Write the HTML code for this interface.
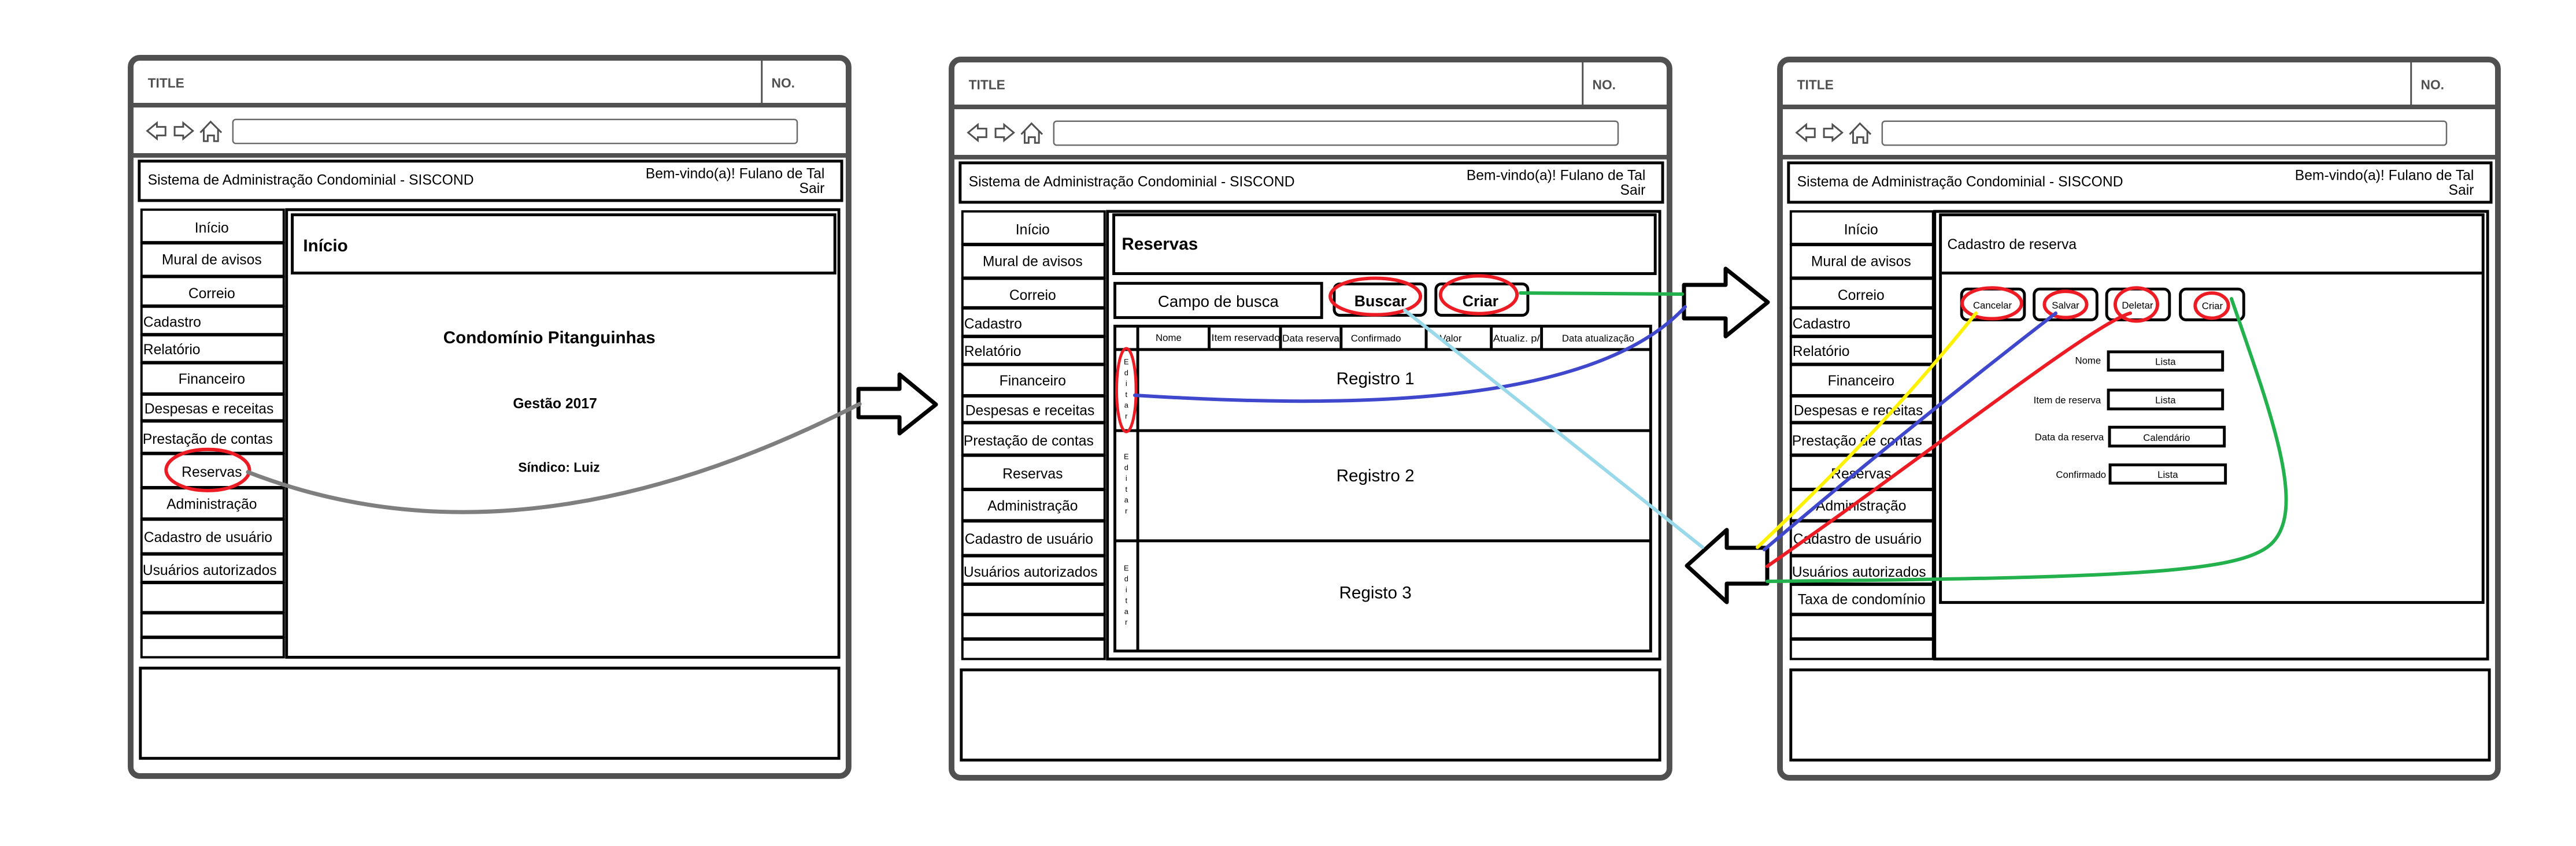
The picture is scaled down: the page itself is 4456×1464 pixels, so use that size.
<!DOCTYPE html>
<html><head><meta charset="utf-8"><style>
html,body{margin:0;padding:0;background:#fff;}
svg{display:block}
text{font-family:"Liberation Sans",sans-serif;fill:#000}
</style></head><body>
<svg width="4456" height="1464" viewBox="0 0 4456 1464" xmlns="http://www.w3.org/2000/svg">
<rect width="4456" height="1464" fill="#fff"/>

<!-- ============ PANEL 1 ============ -->
<g transform="translate(226,100) scale(0.988)">
<rect x="0" y="0" width="1257" height="1258" rx="16" fill="#fff" stroke="#505050" stroke-width="10"/>
<line x1="0" y1="83" x2="1257" y2="83" stroke="#505050" stroke-width="8"/>
<line x1="1105" y1="0" x2="1105" y2="83" stroke="#505050" stroke-width="3"/>
<text x="30" y="52" font-size="23" font-weight="bold" style="fill:#505050">TITLE</text>
<text x="1122" y="52" font-size="23" font-weight="bold" style="fill:#505050">NO.</text>
<line x1="0" y1="171" x2="1257" y2="171" stroke="#505050" stroke-width="8"/>
<rect x="179" y="108" width="988" height="42" rx="5" fill="none" stroke="#6a6a6a" stroke-width="2.5"/>
<g fill="none" stroke="#505050" stroke-width="3" stroke-linejoin="miter">
<polygon points="29,128 46,114 46,121 61,121 61,136 46,136 46,142"/>
<polygon points="109,128 92,114 92,121 77,121 77,136 92,136 92,142"/>
<polyline points="122,131 140,112 159,131"/>
<polyline points="128,125 128,146 135,146 135,136 146,136 146,146 153,146 153,125"/>
</g>
<rect x="15" y="181" width="1230" height="69" fill="none" stroke="#000" stroke-width="5"/>
<text x="30" y="222" font-size="25">Sistema de Administração Condominial - SISCOND</text>
<text x="1215" y="211" font-size="25" text-anchor="end">Bem-vindo(a)! Fulano de Tal</text>
<text x="1215" y="237" font-size="25" text-anchor="end">Sair</text>
<g fill="none" stroke="#000" stroke-width="4">
<rect x="19" y="266" width="249" height="57"/><rect x="19" y="325" width="249" height="57"/>
<rect x="19" y="384" width="249" height="50"/><rect x="19" y="436" width="249" height="48"/>
<rect x="19" y="486" width="249" height="47"/><rect x="19" y="535" width="249" height="53"/>
<rect x="19" y="590" width="249" height="45"/><rect x="19" y="637" width="249" height="55"/>
<rect x="19" y="694" width="249" height="58"/><rect x="19" y="754" width="249" height="53"/>
<rect x="19" y="809" width="249" height="59"/><rect x="19" y="870" width="249" height="48"/>
<rect x="19" y="920" width="249" height="51"/><rect x="19" y="973" width="249" height="41"/>
<rect x="19" y="1016" width="249" height="34"/>
</g>
<g font-size="25">
<text x="142" y="306" text-anchor="middle">Início</text>
<text x="142" y="362" text-anchor="middle">Mural de avisos</text>
<text x="142" y="421" text-anchor="middle">Correio</text>
<text x="22" y="471">Cadastro</text>
<text x="22" y="519">Relatório</text>
<text x="142" y="571" text-anchor="middle">Financeiro</text>
<text x="24" y="623">Despesas e receitas</text>
<text x="21" y="676">Prestação de contas</text>
<text x="142" y="734" text-anchor="middle">Reservas</text>
<text x="142" y="790" text-anchor="middle">Administração</text>
<text x="23" y="848">Cadastro de usuário</text>
<text x="21" y="906">Usuários autorizados</text>
</g>
<rect x="273" y="266" width="967" height="784" fill="none" stroke="#000" stroke-width="5"/>
<rect x="283" y="275" width="950" height="102" fill="none" stroke="#000" stroke-width="5"/>
<text x="302" y="339" font-size="30" font-weight="bold">Início</text>
<text x="733" y="500" font-size="30" font-weight="bold" text-anchor="middle">Condomínio Pitanguinhas</text>
<text x="743" y="614" font-size="25" font-weight="bold" text-anchor="middle">Gestão 2017</text>
<text x="750" y="725" font-size="23" font-weight="bold" text-anchor="middle">Síndico: Luiz</text>
<rect x="17" y="1069" width="1223" height="158" fill="none" stroke="#000" stroke-width="5"/>
<ellipse cx="135" cy="722" rx="73" ry="36" fill="none" stroke="#ed1c24" stroke-width="6"/>
</g>

<!-- ============ PANEL 2 ============ -->
<g transform="translate(1646,103) scale(0.988)">
<rect x="0" y="0" width="1257" height="1258" rx="16" fill="#fff" stroke="#505050" stroke-width="10"/>
<line x1="0" y1="83" x2="1257" y2="83" stroke="#505050" stroke-width="8"/>
<line x1="1105" y1="0" x2="1105" y2="83" stroke="#505050" stroke-width="3"/>
<text x="30" y="52" font-size="23" font-weight="bold" style="fill:#505050">TITLE</text>
<text x="1122" y="52" font-size="23" font-weight="bold" style="fill:#505050">NO.</text>
<line x1="0" y1="171" x2="1257" y2="171" stroke="#505050" stroke-width="8"/>
<rect x="179" y="108" width="988" height="42" rx="5" fill="none" stroke="#6a6a6a" stroke-width="2.5"/>
<g fill="none" stroke="#505050" stroke-width="3">
<polygon points="29,128 46,114 46,121 61,121 61,136 46,136 46,142"/>
<polygon points="109,128 92,114 92,121 77,121 77,136 92,136 92,142"/>
<polyline points="122,131 140,112 159,131"/>
<polyline points="128,125 128,146 135,146 135,136 146,136 146,146 153,146 153,125"/>
</g>
<rect x="15" y="181" width="1230" height="69" fill="none" stroke="#000" stroke-width="5"/>
<text x="30" y="222" font-size="25">Sistema de Administração Condominial - SISCOND</text>
<text x="1215" y="211" font-size="25" text-anchor="end">Bem-vindo(a)! Fulano de Tal</text>
<text x="1215" y="237" font-size="25" text-anchor="end">Sair</text>
<g fill="none" stroke="#000" stroke-width="4">
<rect x="19" y="266" width="249" height="57"/><rect x="19" y="325" width="249" height="57"/>
<rect x="19" y="384" width="249" height="50"/><rect x="19" y="436" width="249" height="48"/>
<rect x="19" y="486" width="249" height="47"/><rect x="19" y="535" width="249" height="53"/>
<rect x="19" y="590" width="249" height="45"/><rect x="19" y="637" width="249" height="55"/>
<rect x="19" y="694" width="249" height="58"/><rect x="19" y="754" width="249" height="53"/>
<rect x="19" y="809" width="249" height="59"/><rect x="19" y="870" width="249" height="48"/>
<rect x="19" y="920" width="249" height="51"/><rect x="19" y="973" width="249" height="41"/>
<rect x="19" y="1016" width="249" height="34"/>
</g>
<g font-size="25">
<text x="142" y="306" text-anchor="middle">Início</text>
<text x="142" y="362" text-anchor="middle">Mural de avisos</text>
<text x="142" y="421" text-anchor="middle">Correio</text>
<text x="22" y="471">Cadastro</text>
<text x="22" y="519">Relatório</text>
<text x="142" y="571" text-anchor="middle">Financeiro</text>
<text x="24" y="623">Despesas e receitas</text>
<text x="21" y="676">Prestação de contas</text>
<text x="142" y="734" text-anchor="middle">Reservas</text>
<text x="142" y="790" text-anchor="middle">Administração</text>
<text x="23" y="848">Cadastro de usuário</text>
<text x="21" y="906">Usuários autorizados</text>
</g>
<rect x="273" y="266" width="967" height="784" fill="none" stroke="#000" stroke-width="5"/>
<rect x="284" y="272" width="948" height="103" fill="none" stroke="#000" stroke-width="5"/>
<text x="298" y="333" font-size="30" font-weight="bold">Reservas</text>
<rect x="286" y="392" width="362" height="60" fill="none" stroke="#000" stroke-width="5"/>
<text x="467" y="433" font-size="28" text-anchor="middle">Campo de busca</text>
<rect x="670" y="393" width="160" height="55" rx="10" fill="none" stroke="#000" stroke-width="5"/>
<text x="751" y="432" font-size="27" font-weight="bold" text-anchor="middle">Buscar</text>
<rect x="848" y="393" width="161" height="55" rx="10" fill="none" stroke="#000" stroke-width="5"/>
<text x="926" y="432" font-size="27" font-weight="bold" text-anchor="middle">Criar</text>
<rect x="286" y="467" width="938" height="569" fill="none" stroke="#000" stroke-width="5"/>
<line x1="286" y1="508" x2="1224" y2="508" stroke="#000" stroke-width="5"/>
<line x1="326" y1="467" x2="326" y2="1036" stroke="#000" stroke-width="5"/>
<g stroke="#000" stroke-width="5">
<line x1="451" y1="467" x2="451" y2="508"/><line x1="576" y1="467" x2="576" y2="508"/>
<line x1="682" y1="467" x2="682" y2="508"/><line x1="831" y1="467" x2="831" y2="508"/>
<line x1="945" y1="467" x2="945" y2="508"/><line x1="1033" y1="467" x2="1033" y2="508"/>
<line x1="286" y1="650" x2="1224" y2="650"/><line x1="286" y1="843" x2="1224" y2="843"/>
</g>
<g font-size="17">
<text x="380" y="493" text-anchor="middle">Nome</text>
<text x="455" y="493" textLength="120" lengthAdjust="spacingAndGlyphs">Item reservado</text>
<text x="579" y="494" textLength="100" lengthAdjust="spacingAndGlyphs">Data reserva</text>
<text x="743" y="494" text-anchor="middle">Confirmado</text>
<text x="874" y="494" text-anchor="middle">Valor</text>
<text x="948" y="494" textLength="82" lengthAdjust="spacingAndGlyphs">Atualiz. p/</text>
<text x="1132" y="494" text-anchor="middle">Data atualização</text>
</g>
<g font-size="30" text-anchor="middle">
<text x="742" y="569">Registro 1</text>
<text x="742" y="739">Registro 2</text>
<text x="742" y="944">Registo 3</text>
</g>
<g font-size="13" text-anchor="middle">
<text x="306" y="534">E</text><text x="306" y="553">d</text><text x="306" y="572">i</text><text x="306" y="591">t</text><text x="306" y="610">a</text><text x="306" y="629">r</text>
<text x="306" y="700">E</text><text x="306" y="719">d</text><text x="306" y="738">i</text><text x="306" y="757">t</text><text x="306" y="776">a</text><text x="306" y="795">r</text>
<text x="306" y="895">E</text><text x="306" y="914">d</text><text x="306" y="933">i</text><text x="306" y="952">t</text><text x="306" y="971">a</text><text x="306" y="990">r</text>
</g>
<rect x="17" y="1069" width="1223" height="158" fill="none" stroke="#000" stroke-width="5"/>
<ellipse cx="742" cy="415" rx="79" ry="32" fill="none" stroke="#ed1c24" stroke-width="6"/>
<ellipse cx="923" cy="412" rx="67" ry="33" fill="none" stroke="#ed1c24" stroke-width="6"/>
<ellipse cx="306" cy="579" rx="17" ry="73" fill="none" stroke="#ed1c24" stroke-width="5"/>
</g>

<!-- ============ PANEL 3 ============ -->
<g transform="translate(3079,103) scale(0.988)">
<rect x="0" y="0" width="1257" height="1258" rx="16" fill="#fff" stroke="#505050" stroke-width="10"/>
<line x1="0" y1="83" x2="1257" y2="83" stroke="#505050" stroke-width="8"/>
<line x1="1105" y1="0" x2="1105" y2="83" stroke="#505050" stroke-width="3"/>
<text x="30" y="52" font-size="23" font-weight="bold" style="fill:#505050">TITLE</text>
<text x="1122" y="52" font-size="23" font-weight="bold" style="fill:#505050">NO.</text>
<line x1="0" y1="171" x2="1257" y2="171" stroke="#505050" stroke-width="8"/>
<rect x="179" y="108" width="988" height="42" rx="5" fill="none" stroke="#6a6a6a" stroke-width="2.5"/>
<g fill="none" stroke="#505050" stroke-width="3">
<polygon points="29,128 46,114 46,121 61,121 61,136 46,136 46,142"/>
<polygon points="109,128 92,114 92,121 77,121 77,136 92,136 92,142"/>
<polyline points="122,131 140,112 159,131"/>
<polyline points="128,125 128,146 135,146 135,136 146,136 146,146 153,146 153,125"/>
</g>
<rect x="15" y="181" width="1230" height="69" fill="none" stroke="#000" stroke-width="5"/>
<text x="30" y="222" font-size="25">Sistema de Administração Condominial - SISCOND</text>
<text x="1215" y="211" font-size="25" text-anchor="end">Bem-vindo(a)! Fulano de Tal</text>
<text x="1215" y="237" font-size="25" text-anchor="end">Sair</text>
<g fill="none" stroke="#000" stroke-width="4">
<rect x="19" y="266" width="249" height="57"/><rect x="19" y="325" width="249" height="57"/>
<rect x="19" y="384" width="249" height="50"/><rect x="19" y="436" width="249" height="48"/>
<rect x="19" y="486" width="249" height="47"/><rect x="19" y="535" width="249" height="53"/>
<rect x="19" y="590" width="249" height="45"/><rect x="19" y="637" width="249" height="55"/>
<rect x="19" y="694" width="249" height="58"/><rect x="19" y="754" width="249" height="53"/>
<rect x="19" y="809" width="249" height="59"/><rect x="19" y="870" width="249" height="48"/>
<rect x="19" y="920" width="249" height="51"/><rect x="19" y="973" width="249" height="41"/>
<rect x="19" y="1016" width="249" height="34"/>
</g>
<g font-size="25">
<text x="142" y="306" text-anchor="middle">Início</text>
<text x="142" y="362" text-anchor="middle">Mural de avisos</text>
<text x="142" y="421" text-anchor="middle">Correio</text>
<text x="22" y="471">Cadastro</text>
<text x="22" y="519">Relatório</text>
<text x="142" y="571" text-anchor="middle">Financeiro</text>
<text x="24" y="623">Despesas e receitas</text>
<text x="21" y="676">Prestação de contas</text>
<text x="142" y="734" text-anchor="middle">Reservas</text>
<text x="142" y="790" text-anchor="middle">Administração</text>
<text x="23" y="848">Cadastro de usuário</text>
<text x="21" y="906">Usuários autorizados</text>
<text x="143" y="954" text-anchor="middle">Taxa de condomínio</text>
</g>
<rect x="271" y="266" width="968" height="784" fill="none" stroke="#000" stroke-width="5"/>
<rect x="281" y="272" width="950" height="679" fill="none" stroke="#000" stroke-width="5"/>
<line x1="281" y1="374" x2="1231" y2="374" stroke="#000" stroke-width="5"/>
<text x="293" y="332" font-size="25">Cadastro de reserva</text>
<g fill="none" stroke="#000" stroke-width="5">
<rect x="318" y="402" width="110" height="54" rx="10"/>
<rect x="445" y="402" width="110" height="54" rx="10"/>
<rect x="572" y="402" width="110" height="54" rx="10"/>
<rect x="701" y="402" width="111" height="54" rx="10"/>
</g>
<g font-size="17" text-anchor="middle">
<text x="372" y="436">Cancelar</text>
<text x="500" y="436">Salvar</text>
<text x="626" y="436">Deletar</text>
<text x="757" y="437">Criar</text>
</g>
<g font-size="17" text-anchor="end">
<text x="562" y="533">Nome</text>
<text x="562" y="602">Item de reserva</text>
<text x="567" y="667">Data da reserva</text>
<text x="571" y="733">Confirmado</text>
</g>
<g fill="none" stroke="#000" stroke-width="5">
<rect x="575" y="512" width="200" height="32"/>
<rect x="575" y="579" width="200" height="33"/>
<rect x="577" y="644" width="201" height="33"/>
<rect x="578" y="710" width="202" height="32"/>
</g>
<g font-size="17" text-anchor="middle">
<text x="675" y="535">Lista</text>
<text x="675" y="602">Lista</text>
<text x="677" y="668">Calendário</text>
<text x="679" y="733">Lista</text>
</g>
<rect x="19" y="1069" width="1223" height="158" fill="none" stroke="#000" stroke-width="5"/>
<ellipse cx="371" cy="427" rx="52" ry="27" fill="none" stroke="#ed1c24" stroke-width="6"/>
<ellipse cx="500" cy="429" rx="37" ry="23" fill="none" stroke="#ed1c24" stroke-width="6"/>
<ellipse cx="624" cy="429" rx="37" ry="29" fill="none" stroke="#ed1c24" stroke-width="6"/>
<ellipse cx="756" cy="431" rx="29" ry="22" fill="none" stroke="#ed1c24" stroke-width="6"/>
</g>

<!-- ============ ARROWS ============ -->
<g fill="#fff" stroke="#000" stroke-width="7" stroke-linejoin="round">
<polygon points="1485,673 1556,673 1556,648 1619,700 1556,750 1556,722 1485,722"/>
<polygon points="2913,493 2985,493 2985,465 3058,523 2985,582 2985,551 2913,551"/>
<polygon points="3057,948 2987,948 2987,917 2918,979 2987,1042 2987,1010 3057,1010"/>
</g>

<!-- ============ CONNECTORS ============ -->
<g fill="none" stroke-linecap="round" stroke-width="6">
<path d="M429,817 Q900,1000 1487,699" stroke="#7f7f7f" stroke-width="7"/>
<path d="M1963,684 C2300,705 2750,710 2915,531" stroke="#3f48cc"/>
<path d="M2630,507 L2910,509" stroke="#22b14c"/>
<path d="M2430,537 L2945,947" stroke="#99d9ea"/>
<path d="M3418,542 Q3260,740 3040,947" stroke="#fff200"/>
<path d="M3556,542 Q3300,740 3052,951" stroke="#3f48cc"/>
<path d="M3685,542 C3620,560 3330,790 3057,980" stroke="#ed1c24"/>
<path d="M3860,517 C3930,720 3990,880 3930,940 C3880,990 3700,1000 3057,1006" stroke="#22b14c"/>
</g>
</svg>
</body></html>
